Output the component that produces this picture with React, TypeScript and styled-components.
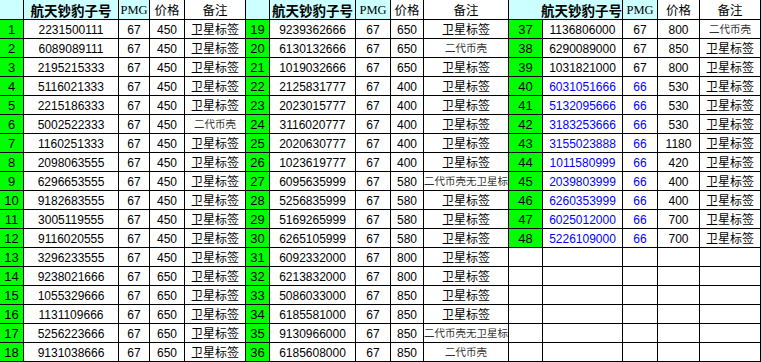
import React from 'react';
import styled, { createGlobalStyle } from 'styled-components';

const GlobalStyle = createGlobalStyle`
  html, body {
    margin: 0;
    padding: 0;
    background: #fff;
  }
  body {
    font-family: "Liberation Sans", "Noto Sans CJK SC", sans-serif;
  }
`;

const HEAD_BG = '#ccffff';
const GREEN = '#00ff00';
const BLUE = '#0000ff';

const Sheet = styled.div`
  display: flex;
  width: 761px;
  height: 362px;
  overflow: hidden;
`;

const Block = styled.div<{ $cols: string }>`
  display: grid;
  grid-template-columns: ${({ $cols }) => $cols};
  grid-template-rows: 20px repeat(18, 19px);
  flex-shrink: 0;
`;

const Cell = styled.div<{ $bg?: string; $color?: string; $span?: number; $align?: string }>`
  grid-column: span ${({ $span }) => $span ?? 1};
  box-sizing: border-box;
  border-right: 1px solid #000;
  border-bottom: 1px solid #000;
  background: ${({ $bg }) => $bg ?? '#fff'};
  color: ${({ $color }) => $color ?? '#000'};
  display: flex;
  align-items: center;
  justify-content: ${({ $align }) => $align ?? 'center'};
  overflow: hidden;
  white-space: nowrap;
  font-size: 12px;
  line-height: 18px;
  padding-top: 1px;
`;

const IndexCell = styled(Cell)`
  font-size: 13px;
`;

const TitleCell = styled(Cell)`
  font-family: "Noto Sans CJK SC", sans-serif;
  font-weight: 700;
  font-size: 13.5px;
  padding-top: 0;
`;

const PmgHead = styled(Cell)`
  font-family: "Liberation Serif", serif;
  font-size: 12.5px;
  padding-top: 0;
`;

const LabelHead = styled(Cell)`
  font-family: "Noto Sans CJK SC", sans-serif;
  font-size: 12.5px;
  padding-top: 0;
`;

const Note = styled(Cell)<{ $small?: boolean }>`
  font-family: "Noto Sans CJK SC", sans-serif;
  font-size: ${({ $small }) => ($small ? '10.5px' : '12px')};
  color: ${({ $small }) => ($small ? '#333' : '#000')};
  padding-top: 0;
`;

type Row = [number, string, string, string, string, boolean?];

const SAT = '卫星标签';
const SHELL = '二代币壳';
const SHELL_NO = '二代币壳无卫星标签';

const group1: Row[] = [
  [1, '2231500111', '67', '450', SAT],
  [2, '6089089111', '67', '450', SAT],
  [3, '2195215333', '67', '450', SAT],
  [4, '5116021333', '67', '450', SAT],
  [5, '2215186333', '67', '450', SAT],
  [6, '5002522333', '67', '450', SHELL],
  [7, '1160251333', '67', '450', SAT],
  [8, '2098063555', '67', '450', SAT],
  [9, '6296653555', '67', '450', SAT],
  [10, '9182683555', '67', '450', SAT],
  [11, '3005119555', '67', '450', SAT],
  [12, '9116020555', '67', '450', SAT],
  [13, '3296233555', '67', '450', SAT],
  [14, '9238021666', '67', '650', SAT],
  [15, '1055329666', '67', '650', SAT],
  [16, '1131109666', '67', '650', SAT],
  [17, '5256223666', '67', '650', SAT],
  [18, '9131038666', '67', '650', SAT],
];

const group2: Row[] = [
  [19, '9239362666', '67', '650', SAT],
  [20, '6130132666', '67', '650', SHELL],
  [21, '1019032666', '67', '650', SAT],
  [22, '2125831777', '67', '400', SAT],
  [23, '2023015777', '67', '400', SAT],
  [24, '3116020777', '67', '400', SAT],
  [25, '2020630777', '67', '400', SAT],
  [26, '1023619777', '67', '400', SAT],
  [27, '6095635999', '67', '580', SHELL_NO],
  [28, '5256835999', '67', '580', SAT],
  [29, '5169265999', '67', '580', SAT],
  [30, '6265105999', '67', '580', SAT],
  [31, '6092332000', '67', '800', SAT],
  [32, '6213832000', '67', '800', SAT],
  [33, '5086033000', '67', '850', SAT],
  [34, '6185581000', '67', '850', SAT],
  [35, '9130966000', '67', '850', SHELL_NO],
  [36, '6185608000', '67', '850', SHELL],
];

const group3: Row[] = [
  [37, '1136806000', '67', '800', SHELL],
  [38, '6290089000', '67', '850', SAT],
  [39, '1031821000', '67', '800', SAT],
  [40, '6031051666', '66', '530', SAT, true],
  [41, '5132095666', '66', '530', SAT, true],
  [42, '3183253666', '66', '530', SAT, true],
  [43, '3155023888', '66', '1180', SAT, true],
  [44, '1011580999', '66', '420', SAT, true],
  [45, '2039803999', '66', '400', SAT, true],
  [46, '6260353999', '66', '400', SAT, true],
  [47, '6025012000', '66', '700', SAT, true],
  [48, '5226109000', '66', '700', SAT, true],
];

const TITLE = '航天钞豹子号';

const DataRows = ({ rows, total }: { rows: Row[]; total: number }) => (
  <>
    {rows.map(([idx, num, pmg, price, note, blue]) => {
      const c = blue ? BLUE : undefined;
      const small = note !== SAT;
      return (
        <React.Fragment key={idx}>
          <IndexCell $bg={GREEN}>{idx}</IndexCell>
          <Cell $color={c}>{num}</Cell>
          <Cell $color={c}>{pmg}</Cell>
          <Cell>{price}</Cell>
          <Note $small={small} $align={note === SHELL_NO ? 'flex-start' : 'center'}>
            {note}
          </Note>
        </React.Fragment>
      );
    })}
    {Array.from({ length: total - rows.length }).map((_, i) => (
      <React.Fragment key={`e${i}`}>
        <Cell />
        <Cell />
        <Cell />
        <Cell />
        <Cell />
      </React.Fragment>
    ))}
  </>
);

const Header = ({ merged }: { merged?: boolean }) => (
  <>
    {merged ? (
      <TitleCell $bg={HEAD_BG} $span={2} $align="flex-end">
        {TITLE}
      </TitleCell>
    ) : (
      <>
        <Cell $bg={HEAD_BG} />
        <TitleCell $bg={HEAD_BG}>{TITLE}</TitleCell>
      </>
    )}
    <PmgHead $bg={HEAD_BG}>PMG</PmgHead>
    <LabelHead>价格</LabelHead>
    <LabelHead>备注</LabelHead>
  </>
);

export default function App() {
  return (
    <>
      <GlobalStyle />
      <Sheet>
        <Block $cols="24px 95px 31px 35px 61px">
          <Header />
          <DataRows rows={group1} total={18} />
        </Block>
        <Block $cols="24px 86px 35px 33px 85px">
          <Header />
          <DataRows rows={group2} total={18} />
        </Block>
        <Block $cols="34px 80px 35px 42px 61px">
          <Header merged />
          <DataRows rows={group3} total={18} />
        </Block>
      </Sheet>
    </>
  );
}
